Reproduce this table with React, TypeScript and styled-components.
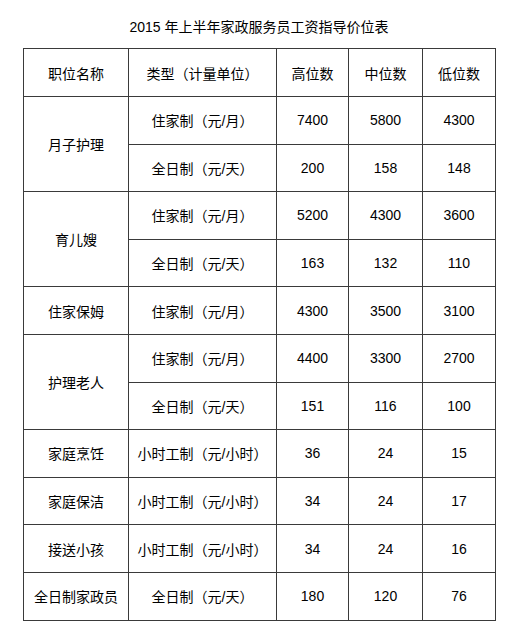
import * as React from "react"
import styled, { createGlobalStyle } from "styled-components"

//style
const GlobalStyle = createGlobalStyle`
  html, body {
    margin: 0;
    padding: 0;
    background: #fff;
  }
  body {
    font-family: "Liberation Sans", "Noto Sans CJK SC", sans-serif;
    color: #000;
  }
`

const Page = styled.div`
  width: 472px;
  margin-left: 23px;
  padding-top: 17px;
`

const Title = styled.h1`
  margin: 0 0 11px;
  font-size: 14px;
  font-weight: normal;
  line-height: 20px;
  text-align: center;
`

const Table = styled.table`
  width: 472px;
  border-collapse: collapse;
  table-layout: fixed;
`

const Row = styled.tr<{ $head?: boolean }>`
  height: ${(p) => (p.$head ? "48px" : "47.6px")};
`

const Cell = styled.td`
  border: 1px solid #3a3a3a;
  padding: 0;
  font-size: 14px;
  text-align: center;
  vertical-align: middle;
  white-space: nowrap;
`

//data
interface IPriceRow {
  kind: string
  high: number
  mid: number
  low: number
}

interface IGroup {
  name: string
  rows: IPriceRow[]
}

const live = "住家制（元/月）"
const day = "全日制（元/天）"
const hour = "小时工制（元/小时）"

const groups: IGroup[] = [
  {
    name: "月子护理",
    rows: [
      { kind: live, high: 7400, mid: 5800, low: 4300 },
      { kind: day, high: 200, mid: 158, low: 148 },
    ],
  },
  {
    name: "育儿嫂",
    rows: [
      { kind: live, high: 5200, mid: 4300, low: 3600 },
      { kind: day, high: 163, mid: 132, low: 110 },
    ],
  },
  {
    name: "住家保姆",
    rows: [{ kind: live, high: 4300, mid: 3500, low: 3100 }],
  },
  {
    name: "护理老人",
    rows: [
      { kind: live, high: 4400, mid: 3300, low: 2700 },
      { kind: day, high: 151, mid: 116, low: 100 },
    ],
  },
  { name: "家庭烹饪", rows: [{ kind: hour, high: 36, mid: 24, low: 15 }] },
  { name: "家庭保洁", rows: [{ kind: hour, high: 34, mid: 24, low: 17 }] },
  { name: "接送小孩", rows: [{ kind: hour, high: 34, mid: 24, low: 16 }] },
  { name: "全日制家政员", rows: [{ kind: day, high: 180, mid: 120, low: 76 }] },
]

const App = () => {
  return (
    <Page>
      <GlobalStyle />
      <Title>2015 年上半年家政服务员工资指导价位表</Title>
      <Table>
        <colgroup>
          <col style={{ width: 105 }} />
          <col style={{ width: 148 }} />
          <col style={{ width: 72 }} />
          <col style={{ width: 74 }} />
          <col style={{ width: 73 }} />
        </colgroup>
        <tbody>
          <Row $head>
            <Cell>职位名称</Cell>
            <Cell>类型（计量单位）</Cell>
            <Cell>高位数</Cell>
            <Cell>中位数</Cell>
            <Cell>低位数</Cell>
          </Row>
          {groups.map((g) =>
            g.rows.map((r, i) => (
              <Row key={g.name + i}>
                {i === 0 && <Cell rowSpan={g.rows.length}>{g.name}</Cell>}
                <Cell>{r.kind}</Cell>
                <Cell>{r.high}</Cell>
                <Cell>{r.mid}</Cell>
                <Cell>{r.low}</Cell>
              </Row>
            ))
          )}
        </tbody>
      </Table>
    </Page>
  )
}

export default App
